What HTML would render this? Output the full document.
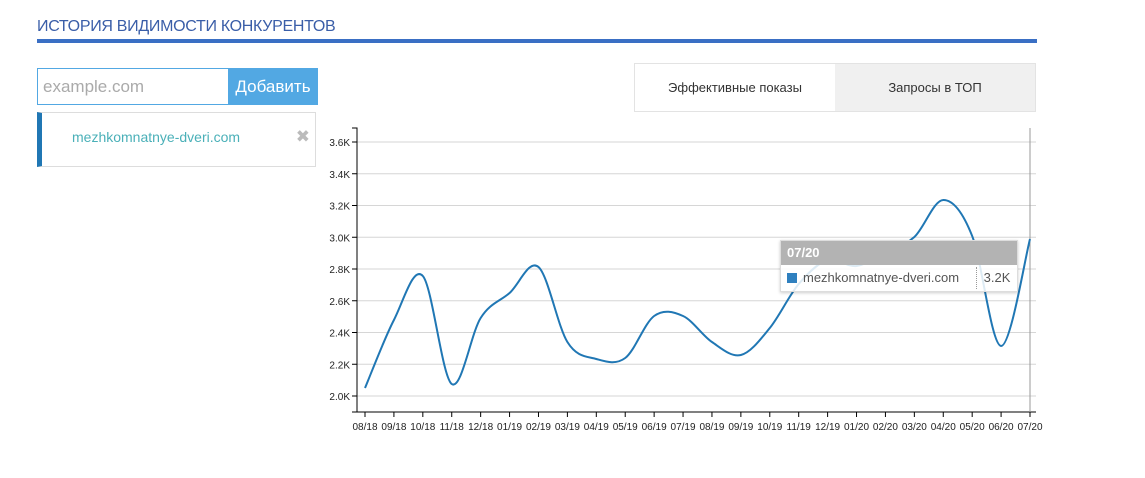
<!DOCTYPE html>
<html><head><meta charset="utf-8"><style>
body{margin:0;width:1145px;height:478px;background:#fff;font-family:"Liberation Sans","DejaVu Sans",sans-serif;position:relative;overflow:hidden}
.t{position:absolute;left:37px;top:18px;font-size:16px;color:#3a5ea8;letter-spacing:-0.3px}
.bar{position:absolute;left:37px;top:39px;width:1000px;height:4px;background:#3a6fc4}
.in{position:absolute;left:37px;top:68px;font-size:17px;color:#aaa;line-height:35px;padding-left:5px;box-sizing:border-box;width:192px;height:37px;border:1px solid #52a8e3}
.btn{position:absolute;left:228px;top:68px;width:90px;height:37px;background:#52a8e3;color:#fff;font-size:17px;line-height:37px;text-align:center}
.item{position:absolute;left:37px;top:112px;width:279px;height:55px;border:1px solid #ddd;border-left:5px solid #2077b4;box-sizing:border-box}
.item span{position:absolute;left:30px;top:16px;font-size:14px;color:#4ab0b8}
.item b{position:absolute;right:5px;top:14px;color:#bbb;font-size:17px}
.tabs{position:absolute;left:634px;top:63px;width:402px;height:49px;border:1px solid #e3e3e3;box-sizing:border-box;display:flex;font-size:13px;color:#333}
.tabs div{flex:1;text-align:center;line-height:47px}
.tabs div+div{background:#f0f0f0}
.tt{position:absolute;left:780px;top:240px;width:236px;height:50px;border:1px solid #ddd;background:rgba(255,255,255,.85);box-shadow:0 1px 3px rgba(0,0,0,.2)}
.tt .h{background:#b3b3b3;color:#fff;font-size:13px;height:24px;line-height:24px;padding-left:6px;font-weight:bold}
.tt .r{font-size:13px;color:#555;line-height:25px;padding-left:6px;position:relative}
.tt .r i{display:inline-block;width:10px;height:10px;background:#2f80bf;margin-right:6px;vertical-align:-1px}
.tt .r em{font-style:normal;position:absolute;right:0;top:0;width:40px;border-left:1px dotted #999;text-align:center;height:22px;margin-top:2px;line-height:22px}
</style></head><body>
<div class="t">ИСТОРИЯ ВИДИМОСТИ КОНКУРЕНТОВ</div>
<div class="bar"></div>
<div class="in">example.com</div>
<div class="btn">Добавить</div>
<div class="item"><span>mezhkomnatnye-dveri.com</span><b>✖</b></div>
<div class="tabs"><div>Эффективные показы</div><div>Запросы в ТОП</div></div>
<svg id="c" width="1145" height="478" style="position:absolute;left:0;top:0" font-family="Liberation Sans,sans-serif" font-size="10"></svg>
<div class="tt"><div class="h">07/20</div><div class="r"><i></i>mezhkomnatnye-dveri.com<em>3.2K</em></div></div>
<script>
var s='',lab=['3.6K','3.4K','3.2K','3.0K','2.8K','2.6K','2.4K','2.2K','2.0K'];
for(var i=0;i<9;i++){var y=142+i*31.75;s+='<line x1="357" x2="1036" y1="'+y+'" y2="'+y+'" stroke="#d6d6d6"/><line x1="352" x2="357" y1="'+y+'" y2="'+y+'" stroke="#000"/><text x="350" y="'+(y+4)+'" text-anchor="end" fill="#222">'+lab[i]+'</text>';}
s+='<path d="M352,128H357V412H352" fill="none" stroke="#000"/><line x1="357" x2="1036" y1="412" y2="412" stroke="#000"/><line x1="1030" x2="1030" y1="128" y2="412" stroke="#999"/>';
var m=['08/18','09/18','10/18','11/18','12/18','01/19','02/19','03/19','04/19','05/19','06/19','07/19','08/19','09/19','10/19','11/19','12/19','01/20','02/20','03/20','04/20','05/20','06/20','07/20'];
var v=[388,320,276,384,318,293,267,342,359,358,316,316,342,355,328,284,260,266,252,237,200,236,346,239];
var st=(1030-365)/23,P=[];
for(var i=0;i<24;i++){var x=365+i*st;P.push([x,v[i]]);s+='<line x1="'+x+'" x2="'+x+'" y1="412" y2="417" stroke="#000"/><text x="'+x+'" y="430" text-anchor="middle" fill="#222">'+m[i]+'</text>';}
var d='M'+P[0];
for(var i=0;i<23;i++){var p0=P[i-1]||P[i],p1=P[i],p2=P[i+1],p3=P[i+2]||p2;
d+='C'+(p1[0]+(p2[0]-p0[0])/6)+','+(p1[1]+(p2[1]-p0[1])/6)+' '+(p2[0]-(p3[0]-p1[0])/6)+','+(p2[1]-(p3[1]-p1[1])/6)+' '+p2[0]+','+p2[1];}
s+='<path d="'+d+'" fill="none" stroke="#2077b4" stroke-width="2"/>';
document.getElementById('c').innerHTML=s;
</script>
</body></html>
